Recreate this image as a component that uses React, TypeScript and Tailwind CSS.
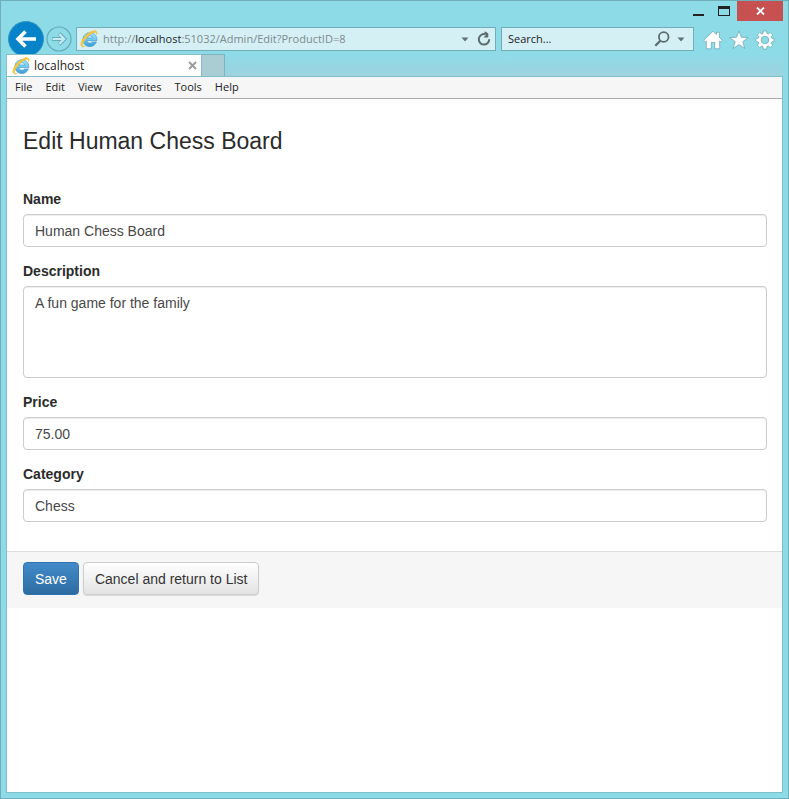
import { useId, type ReactNode } from "react";

const chromeFont = "font-['Open_Sans','Noto_Sans',sans-serif]";
const pageFont = "font-['Liberation_Sans',Arial,sans-serif]";

function IeLogo() {
  const id = useId();
  return (
    <svg viewBox="0 0 18 18" className="size-[18px] shrink-0" aria-hidden="true">
      <defs>
        <linearGradient id={id} x1="0" y1="0" x2="0" y2="1">
          <stop offset="0" stopColor="#a5e2f8" />
          <stop offset="0.5" stopColor="#6fcbf0" />
          <stop offset="1" stopColor="#3a9bd8" />
        </linearGradient>
      </defs>
      <path
        d="M16.800 10.600H7.100c.1 1.600 1.200 2.600 2.800 2.600 1.100 0 1.900-.4 2.400-1.200h4.100c-.9 2.700-3.400 4.500-6.500 4.500-4.100 0-7-2.900-7-6.800 0-4 2.900-7 7-7s6.900 2.800 6.900 6.900zM7.200 7.900h5.500C12.500 6.500 11.500 5.700 9.900 5.700S7.400 6.500 7.200 7.900z"
        fill={`url(#${id})`}
        stroke="#3b8fc6"
        strokeWidth="0.600"
      />
      <path
        d="M2.600 16.800C-.5 15.500 1.200 10.500 5.200 6.300 9.300 2 14.400-.3 16.300 1.300c.8.700.8 1.800.2 3.200.1-1.200-.2-2-1-2.200-2-.5-5.500 1.700-8.700 5.100-3.300 3.600-5.200 7.400-4.200 8.800.4.500 1.200.6 2.300.2-.8.500-1.600.6-2.300.4z"
        fill="#fccb3b"
        stroke="#f2b928"
        strokeWidth="0.700"
      />
    </svg>
  );
}

function Caret() {
  return (
    <svg viewBox="0 0 8 5" className="h-[5px] w-2" aria-hidden="true">
      <path d="M.5.500h7L4 4.500z" fill="#5c7276" />
    </svg>
  );
}

function WindowButtons() {
  return (
    <div className="flex h-5 justify-end">
      <button aria-label="Minimize" className="flex w-[26px] items-center justify-center pt-[7px]">
        <span className="h-0.5 w-[11px] bg-[#222]" />
      </button>
      <button aria-label="Maximize" className="flex w-[26px] items-center justify-center">
        <span className="h-[10px] w-3 border border-t-[3px] border-[#222]" />
      </button>
      <button aria-label="Close" className="flex w-[46px] items-center justify-center bg-[#c75050]">
        <svg viewBox="0 0 9 8" className="h-2 w-[9px]" aria-hidden="true">
          <path d="M1 .5l7 7M8 .5l-7 7" stroke="#fff" strokeWidth="1.800" />
        </svg>
      </button>
    </div>
  );
}

function AddressBar() {
  return (
    <div className="flex h-[33px] items-start pr-2">
      <button aria-label="Back" className="-mb-1 ml-[2px] size-9 shrink-0">
        <svg viewBox="0 0 36 36" className="size-9" aria-hidden="true">
          <circle cx="18" cy="18" r="17.500" fill="#0683c9" stroke="#3397bd" />
          <path d="M28 18H10.500M17.500 10.500L10 18l7.500 7.500" fill="none" stroke="#fff" strokeWidth="3.600" />
        </svg>
      </button>
      <button aria-label="Forward" className="ml-[2px] mt-[5px] size-[26px] shrink-0">
        <svg viewBox="0 0 26 26" className="size-[26px]" aria-hidden="true">
          <circle cx="13" cy="13" r="12" fill="#8edbe8" stroke="#66a9b7" strokeWidth="1.200" />
          <path d="M6 13h12M13 7.500l5.500 5.500-5.500 5.500" fill="none" stroke="#66a9b7" strokeWidth="3.800" />
          <path d="M6.500 13h11M13.200 8l5 5-5 5" fill="none" stroke="#c5ecf2" strokeWidth="2.200" />
        </svg>
      </button>
      <div className="ml-1 mt-[6px] flex h-6 flex-1 items-center border border-[#70adb9] bg-[#d5f0f5] pl-[3px] pr-1">
        <IeLogo />
        <span className="ml-[5px] flex-1 whitespace-nowrap text-[11px] text-[#7c8a8d]">
          http://<span className="text-[#1c2628]">localhost</span>:51032/Admin/Edit?ProductID=8
        </span>
        <button aria-label="Show addresses" className="mr-2">
          <Caret />
        </button>
        <button aria-label="Refresh">
          <svg viewBox="0 0 14 16" className="h-4 w-[14px]" aria-hidden="true">
            <path d="M8.300 3.300A5.200 5.200 0 1 0 12.200 8.300" fill="none" stroke="#5b6b6e" strokeWidth="2" />
            <path d="M7.200.800h1.800l2.300 2V6.500H6.500l2.200-2.200z" fill="#5b6b6e" />
          </svg>
        </button>
      </div>
      <div className="ml-[5px] mt-[6px] flex h-6 w-[193px] items-center border border-[#70adb9] bg-[#d5f0f5] pl-[6px] pr-2">
        <input
          aria-label="Search"
          placeholder="Search..."
          className="min-w-0 flex-1 bg-transparent text-[11px] text-[#222] outline-none placeholder:text-[#222]"
        />
        <button aria-label="Run search" className="mr-[7px]">
          <svg viewBox="0 0 16 16" className="size-4" aria-hidden="true">
            <circle cx="9.700" cy="6" r="4.800" fill="none" stroke="#5b6b6e" strokeWidth="1.800" />
            <path d="M6.300 9.700L1.300 14.700" stroke="#5b6b6e" strokeWidth="2.300" />
          </svg>
        </button>
        <button aria-label="Search options">
          <Caret />
        </button>
      </div>
      <div className="ml-[9px] mt-[9px] flex gap-[6px]">
        <button aria-label="Home">
          <svg viewBox="0 0 20 20" className="size-5" aria-hidden="true">
            <path
              d="M10 1.200L.7 10.300l1.600 1.600 1-.9v7.800h5v-6.300h3.400v6.300h5V11l1 .9 1.600-1.600-2.900-2.900V2.300h-2.900v2.200z"
              fill="#fff"
              stroke="#70a9b5"
              strokeWidth="0.800"
            />
          </svg>
        </button>
        <button aria-label="Favorites">
          <svg viewBox="0 0 20 20" className="size-5" aria-hidden="true">
            <path
              d="M10 .8l2.400 6.500 6.900.2-5.500 4.200 2 6.800L10 14.600l-5.800 3.900 2-6.800L.7 7.500l6.900-.2z"
              fill="#fff"
              stroke="#70a9b5"
              strokeWidth="0.800"
            />
          </svg>
        </button>
        <button aria-label="Tools">
          <svg viewBox="0 0 20 20" className="size-5" aria-hidden="true">
            <path
              fill="#fff"
              stroke="#70a9b5"
              strokeWidth="0.800"
              fillRule="evenodd"
              d="M8.300 1h3.400l.3 2.500 1.300.5 2-1.500 2.300 2.300-1.500 2 .5 1.300 2.500.3v3.300l-2.500.3-.5 1.300 1.500 2-2.300 2.300-2-1.500-1.300.5-.3 2.500H8.300L8 16.600l-1.300-.5-2 1.500-2.300-2.300 1.500-2-.5-1.300-2.500-.3V8.400l2.500-.3.500-1.300-1.500-2 2.300-2.300 2 1.500L8 3.500zM10 6.200a3.800 3.800 0 1 0 0 7.600 3.800 3.800 0 0 0 0-7.600z"
            />
          </svg>
        </button>
      </div>
    </div>
  );
}

function TabStrip() {
  return (
    <div className="relative flex h-[22px] bg-linear-to-b from-[#8edbe8] via-[#95d6e2] to-[#9dd2de]">
      <div className="flex w-[196px] items-center border border-b-0 border-[#86bdc8] bg-white pl-[5px] pr-1">
        <IeLogo />
        <span className="ml-1 flex-1 text-xs text-[#222]">localhost</span>
        <button aria-label="Close tab">
          <svg viewBox="0 0 9 9" className="size-[9px]" aria-hidden="true">
            <path d="M1 1l7 7M8 1L1 8" stroke="#999" strokeWidth="1.800" />
          </svg>
        </button>
      </div>
      <button aria-label="New tab" className="w-[23px] border border-b-0 border-l-0 border-[#7fb4bf] bg-[#aacdd4]" />
    </div>
  );
}

function Field({ label, children }: { label: string; children: (id: string) => ReactNode }) {
  const id = useId();
  return (
    <div className="mb-[14px]">
      <label htmlFor={id} className="mb-[5px] block leading-5 font-bold text-[#2b2b2b]">
        {label}
      </label>
      {children(id)}
    </div>
  );
}

const control =
  "block w-full rounded-sm border border-[#ccc] bg-white px-[11px] text-[#484848] shadow-[inset_0_1px_1px_rgba(0,0,0,0.075)] outline-none";

function TextField({ label, value }: { label: string; value: string }) {
  return (
    <Field label={label}>
      {(id) => <input id={id} defaultValue={value} className={`${control} h-[33px]`} />}
    </Field>
  );
}

function EditForm() {
  return (
    <form className={`${pageFont} text-sm`} onSubmit={(e) => e.preventDefault()}>
      <div className="pt-[29px] pr-[15px] pb-[15px] pl-4">
        <h1 className="mb-[35px] text-[23px] leading-[26px] text-[#2b2b2b]">Edit Human Chess Board</h1>
        <TextField label="Name" value="Human Chess Board" />
        <Field label="Description">
          {(id) => (
            <textarea
              id={id}
              defaultValue="A fun game for the family"
              className={`${control} h-[92px] resize-none py-[6px] leading-5`}
            />
          )}
        </Field>
        <TextField label="Price" value="75.00" />
        <TextField label="Category" value="Chess" />
      </div>
      <div className="flex gap-1 border-t border-[#ddd] bg-[#f6f6f6] px-4 pt-[10px] pb-[13px]">
        <button
          type="submit"
          className="h-[33px] rounded-sm border border-[#2f74b0] bg-linear-to-b from-[#428bca] to-[#2d6ca2] px-[11px] text-white"
        >
          Save
        </button>
        <button
          type="button"
          className="h-[33px] rounded-sm border border-[#ccc] bg-linear-to-b from-white to-[#e3e3e3] px-[11px] text-[#333] shadow-[0_1px_1px_rgba(0,0,0,0.12)]"
        >
          Cancel and return to List
        </button>
      </div>
    </form>
  );
}

export default function App() {
  return (
    <div className="flex min-h-screen flex-col border border-[#6fadb9] bg-[#8edbe8] px-[5px] pb-[5px]">
      <header className={chromeFont}>
        <WindowButtons />
        <AddressBar />
        <TabStrip />
      </header>
      <main className="flex-1 border border-[#7fbfcc] bg-white">
        <nav className={`${chromeFont} flex h-[22px] items-center gap-[13px] border-b border-[#aaa] bg-[#f6f6f6] pl-2 text-[11px] text-[#222]`}>
          {["File", "Edit", "View", "Favorites", "Tools", "Help"].map((item) => (
            <button key={item}>{item}</button>
          ))}
        </nav>
        <EditForm />
      </main>
    </div>
  );
}
